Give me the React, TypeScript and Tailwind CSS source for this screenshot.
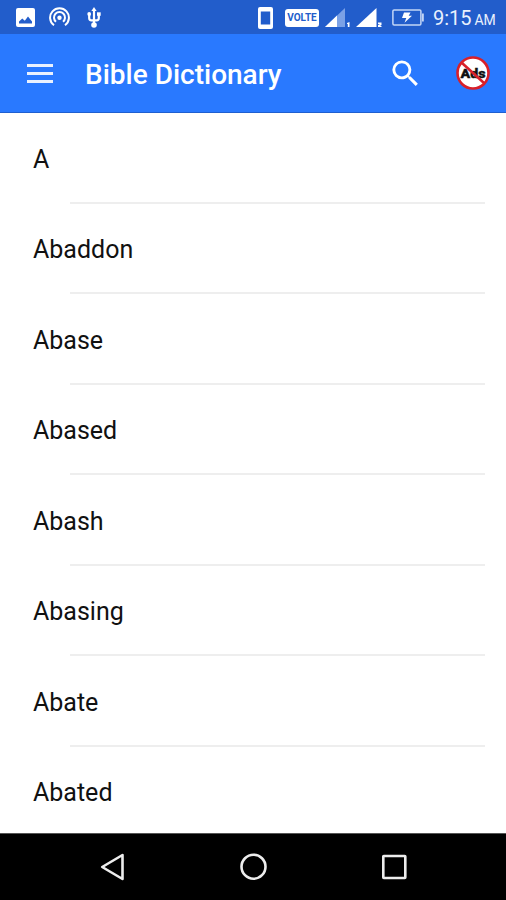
import type { ReactNode } from "react";

const WORDS = ["A", "Abaddon", "Abase", "Abased", "Abash", "Abasing", "Abate", "Abated"];

function StatusBar() {
  return (
    <div className="flex h-[34px] shrink-0 items-center bg-[#225dcb] pl-[16px] text-white">
      <svg className="mr-[14px] mt-px h-[19px] w-[19px]" viewBox="0 0 19 19">
        <rect width="19" height="19" rx="2" fill="currentColor" />
        <path d="M3 15.500v-2l3.300-3 2.500 2.300 3.200-4.300 4 5v2z" fill="#225dcb" />
      </svg>
      <svg className="mr-[17px] h-[20px] w-[21px]" viewBox="0 0 21 20" fill="none" stroke="currentColor" strokeWidth="2">
        <path d="M5 18.200a9.400 9.400 0 1 1 11 0" />
        <path d="M7 14.800a5.500 5.500 0 1 1 7 0" />
        <circle cx="10.500" cy="10.800" r="2.200" fill="currentColor" stroke="none" />
      </svg>
      <svg className="mt-px h-[21px] w-[15px]" viewBox="0 0 15 21" fill="none" stroke="currentColor" strokeWidth="2.200">
        <path d="M7 3v15M2.200 7v4c0 1.600.7 2.300 2.200 2.300h5.200c1.500 0 2.200-.7 2.200-2.300V7" />
        <path d="M7 0l2.600 4H4.400z" fill="currentColor" stroke="none" />
        <circle cx="2.200" cy="7" r="1.900" fill="currentColor" stroke="none" />
        <path d="M10 5.300h3.700v3.500H10z" fill="currentColor" stroke="none" />
        <circle cx="7" cy="18" r="2.800" fill="currentColor" stroke="none" />
      </svg>

      <svg className="ml-[156px] mr-[12px] mt-px h-[22px] w-[15px]" viewBox="0 0 15 22">
        <rect width="15" height="22" rx="2" fill="currentColor" />
        <rect x="2.800" y="4.500" width="9.400" height="13" fill="#225dcb" />
      </svg>
      <span className="mr-[6px] mt-px flex h-[18px] w-[34px] items-center justify-center rounded-[3px] bg-white text-[10px] font-bold text-[#225dcb]">
        VOLTE
      </span>
      <svg className="mr-[5px] mt-0.5 h-[20px] w-[26px]" viewBox="0 0 26 20">
        <path d="M0 19L20 0v19z" fill="#7ba1e6" />
        <path d="M0 19L12 7.600V19z" fill="currentColor" />
        <path d="M22 15l2.500-1V19h-1.700v-3H22z" fill="currentColor" />
      </svg>
      <svg className="mr-[10px] mt-0.5 h-[20px] w-[26px]" viewBox="0 0 26 20">
        <path d="M0 19L20.500 0v19z" fill="currentColor" />
        <path d="M22 14.500h3.500v2.500l-1.500 1h1.500v1H22v-2l2-1h-2z" fill="currentColor" />
      </svg>
      <svg className="mr-[9px] mt-px h-[17px] w-[32px]" viewBox="0 0 32 17">
        <rect x=".9" y=".9" width="28" height="15" rx="1.200" fill="none" stroke="#c3d6f6" strokeWidth="1.500" />
        <path d="M30 4.500h1.800v8H30z" fill="#c3d6f6" />
        <path d="M12 3.500h6.500l-1.800 3.200H20l-7.500 7 1.800-4.800H10z" fill="currentColor" />
      </svg>
      <span className="mt-0.5 flex items-baseline whitespace-nowrap text-[#e8f0fd]">
        <span className="text-[20px] leading-none">9:15</span>
        <span className="ml-[3px] text-[14px] leading-none tracking-[-0.3px]">AM</span>
      </span>
    </div>
  );
}

function NoAdsBadge() {
  return (
    <svg className="h-[34px] w-[34px]" viewBox="0 0 34 34" role="img" aria-label="Remove ads">
      <circle cx="17" cy="17" r="15.500" fill="#fff" stroke="#d8202a" strokeWidth="2.600" />
      <text x="17" y="21.500" textAnchor="middle" fontSize="12.500" fontWeight="900" fill="#111" stroke="#111" strokeWidth=".3" textLength="25" lengthAdjust="spacingAndGlyphs">
        Ads
      </text>
      <path d="M6 7l22 20" stroke="#d8202a" strokeWidth="2.600" />
    </svg>
  );
}

function AppBar() {
  return (
    <header className="flex h-[79px] shrink-0 items-center border-b border-[#1f5fd0] bg-[#2979ff] pl-[27px] text-white">
      <button aria-label="Menu" className="flex w-[26px] flex-col gap-[5px]">
        <span className="h-[3px] bg-[#e9f1ff]" />
        <span className="h-[3px] bg-[#e9f1ff]" />
        <span className="h-[3px] bg-[#e9f1ff]" />
      </button>
      <h1 className="ml-[32px] w-[303px] pt-[4px] text-[28px] leading-none font-medium whitespace-nowrap">
        Bible Dictionary
      </h1>
      <button aria-label="Search" className="pt-px">
        <svg className="h-[35px] w-[35px]" viewBox="0 0 24 24" fill="currentColor">
          <path d="M15.500 14h-.79l-.28-.27A6.470 6.470 0 0 0 16 9.500 6.500 6.500 0 1 0 9.500 16c1.610 0 3.090-.59 4.230-1.570l.27.28v.79l5 4.990L20.490 19l-4.990-5zm-6 0C7.010 14 5 11.990 5 9.500S7.010 5 9.500 5 14 7.010 14 9.500 11.990 14 9.500 14z" />
        </svg>
      </button>
      <button aria-label="Remove ads" className="ml-[33px]">
        <NoAdsBadge />
      </button>
    </header>
  );
}

function NavButton({ label, children }: { label: string; children: ReactNode }) {
  return (
    <button aria-label={label} className="flex w-[140px] justify-center">
      <svg className="h-[30px] w-[30px]" viewBox="0 0 30 30" fill="none" stroke="#ededed" strokeWidth="2.600" strokeLinejoin="round">
        {children}
      </svg>
    </button>
  );
}

export default function App() {
  return (
    <div className="flex h-[900px] w-[506px] flex-col overflow-hidden bg-white font-[Roboto,sans-serif]">
      <StatusBar />
      <AppBar />
      <ul className="min-h-0 flex-1 overflow-hidden">
        {WORDS.map((word) => (
          <li key={word} className="flex h-[90.5px] flex-col">
            <span className="flex flex-1 items-center pt-[4.5px] pl-[33px] text-[25px] text-[#111]">{word}</span>
            <span className="mr-[21px] ml-[70px] h-[2px] shrink-0 bg-[#eeeeee]" />
          </li>
        ))}
      </ul>
      <nav className="flex h-[67px] shrink-0 items-center justify-center border-t border-[#555] bg-black">
        <NavButton label="Back">
          <path d="M24.500 3v24L4.200 15z" />
        </NavButton>
        <NavButton label="Home">
          <circle cx="15.500" cy="14.700" r="12" />
        </NavButton>
        <NavButton label="Recents">
          <rect x="5.300" y="4" width="22" height="22" rx=".5" />
        </NavButton>
      </nav>
    </div>
  );
}
